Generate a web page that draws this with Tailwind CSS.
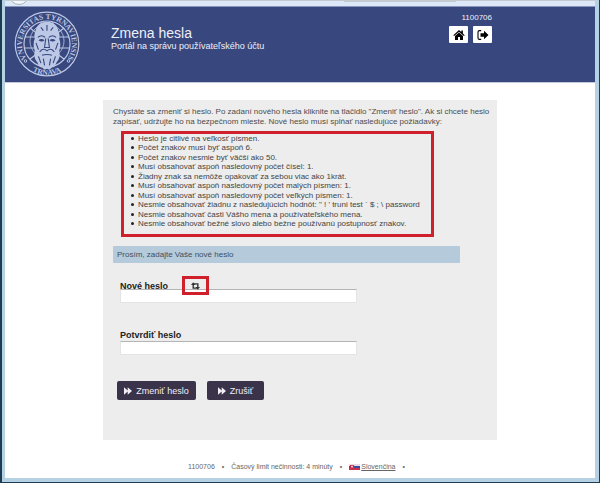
<!DOCTYPE html>
<html lang="sk">
<head>
<meta charset="utf-8">
<title>Zmena hesla</title>
<meta name="viewport" content="width=device-width, initial-scale=1">
<script src="https://cdn.jsdelivr.net/npm/@tailwindcss/browser@4"></script>
</head>
<body class="min-h-screen flex flex-col bg-white border-l-2 border-r border-b border-[#1d3c52] font-['Liberation_Sans',Arial,sans-serif] text-[#4c4c4c]">
<div class="flex-1 flex flex-col border-l-3 border-r-4 border-b-4 border-[#b5d1e4]">
  <div class="relative h-[7px] shrink-0 overflow-hidden border-t border-b border-t-[#c3cbd0] border-b-[#8795bd] bg-[#dce8f7]">
    <div class="absolute -top-4 left-1 size-5 rounded-full border border-[#a9b2ba] bg-[#f3f7fb]"></div>
    <div class="absolute top-0 left-[339px] h-px w-28 bg-[#c3cbd0]"></div>
  </div>
  <header class="flex h-[76px] shrink-0 border-b border-[#c3c9dd] bg-[#38477d] pl-2 text-[#eef0f8]">
    <svg class="mt-[3px] size-[68px] shrink-0" viewBox="0 0 68 68" role="img" aria-label="Universitas Tyrnaviensis Trnava" fill="none" stroke="#bcc8e6">
      <defs>
        <path id="ringTop" d="M16.300 51.700A25 25 0 1 1 51.700 51.700"/>
        <path id="ringBottom" d="M14 57.500A30.500 30.500 0 0 0 54 57.500"/>
      </defs>
      <circle cx="34" cy="34" r="31.800" stroke-width="1.200"/>
      <circle cx="34" cy="34" r="23" stroke-width="1.200"/>
      <g stroke-width="1.200">
        <path d="M12 27h11M45 27h11M11 38h12M45 38h12M17 18l9 7M51 18l-9 7M17 49l8-6M51 49l-8-6M28 12l1 5M40 12l-1 5"/>
        <circle cx="34" cy="31" r="17" stroke-width=".8"/>
      </g>
      <g transform="translate(-7.500 -4) scale(1.220 1.120)">
        <path fill="#bcc8e6" stroke="none" d="M34 14c-6 0-9 4-9.500 9-1 2-1 4-.5 6-1.500 4-1 8 0 11-1 4 0 8 2 10 1 3 2 5 4 5l2 2 2-1 2 1 2-2c2 0 3-2 4-5 2-2 3-6 2-10 1-3 1.500-7 0-11 .5-2 .5-4-.5-6-.5-5-3.500-9-9.500-9z"/>
        <path stroke="#38477d" stroke-width=".9" d="M26.500 28c2-2 4-2 6 0M35.500 28c2-2 4-2 6 0M33 29l-1 8h4l-1-8M28 41c2-3 4-3 6-1 2-2 4-2 6 1M30 44c2-1 6-1 8 0M27 45l2 6M31 47l1 6M37 47l-1 6M41 45l-2 6M29 19l2 3M34 17v5M39 19l-2 3M25 33l2 6M43 33l-2 6"/>
        <path fill="#38477d" stroke="none" d="M27 30.500q2.500-2 5 0-2 2.500-5 0zM36 30.500q2.500-2 5 0-2 2.500-5 0z"/>
      </g>
      <circle cx="12.500" cy="51" r="1.300"/><circle cx="55.500" cy="51" r="1.300"/>
      <g class="font-['Liberation_Serif',serif] font-bold" fill="#bcc8e6" stroke="none" font-size="7.500">
        <text text-anchor="middle"><textPath href="#ringTop" startOffset="50%">VNIVERSITAS TYRNAVIENSIS</textPath></text>
        <text text-anchor="middle"><textPath href="#ringBottom" startOffset="50%">TRNAVA</textPath></text>
      </g>
    </svg>
    <div class="ml-[30px] mt-[18px]">
      <h1 class="text-[14px] leading-4">Zmena hesla</h1>
      <p class="text-[9px] leading-[10px]">Portál na správu používateľského účtu</p>
    </div>
    <div class="ml-auto mr-[103px] mt-[6px] flex flex-col items-end gap-[3px]">
      <span class="text-[8px] leading-[10px]">1100706</span>
      <div class="flex gap-[5px]">
        <button type="button" aria-label="Domov" class="flex h-[17px] w-[19px] items-center justify-center rounded-[1px] bg-white text-black">
          <svg class="size-3" viewBox="0 0 12 12" fill="currentColor"><path d="M6 1L.3 6.200l.8.900L6 2.700l4.900 4.400.8-.9L9.900 4.500V1.500H8.300v1.600zM6 3.500L2 7.100v3.900h3V7.900h2v3.100h3V7.100z"/></svg>
        </button>
        <button type="button" aria-label="Odhlásiť" class="flex h-[17px] w-[19px] items-center justify-center rounded-[1px] bg-white text-black">
          <svg class="size-3" viewBox="0 0 12 12" fill="currentColor"><path fill="none" stroke="currentColor" stroke-width="1.100" d="M4.200 1.600H2.400Q1 1.600 1 3v6q0 1.400 1.400 1.400h1.800"/><path d="M3.500 4.200h3.500V1.700L11.500 6 7 10.300V7.800H3.500z"/></svg>
        </button>
      </div>
    </div>
  </header>

  <main class="mx-auto mt-[17px] w-full max-w-[394px] bg-[#ededed] pb-10 pl-[10px] pr-1 pt-[7px]">
    <p class="text-[8px] leading-[10px]">Chystáte sa zmeniť si heslo. Po zadaní nového hesla kliknite na tlačidlo "Zmeniť heslo". Ak si chcete heslo zapísať, udržujte ho na bezpečnom mieste. Nové heslo musí spĺňať nasledujúce požiadavky:</p>
    <div class="ml-2 mt-1 max-w-[313px] border-3 border-[#cf202b] pb-[6px] pl-[7px]">
      <ul class="flex h-[94px] flex-col justify-between text-[8px] leading-[9px] text-[#444] [&>li]:flex [&>li]:items-center [&>li]:gap-1 [&>li]:before:size-[3px] [&>li]:before:rounded-full [&>li]:before:bg-[#222] [&>li]:before:content-['']">
        <li>Heslo je citlivé na veľkosť písmen.</li>
        <li>Počet znakov musí byť aspoň 6.</li>
        <li>Počet znakov nesmie byť väčší ako 50.</li>
        <li>Musí obsahovať aspoň nasledovný počet čísel: 1.</li>
        <li>Žiadny znak sa nemôže opakovať za sebou viac ako 1krát.</li>
        <li>Musí obsahovať aspoň nasledovný počet malých písmen: 1.</li>
        <li>Musí obsahovať aspoň nasledovný počet veľkých písmen: 1.</li>
        <li>Nesmie obsahovať žiadnu z nasledujúcich hodnôt: " ! ' truni test ` $ ; \ password</li>
        <li>Nesmie obsahovať časti Vášho mena a používateľského mena.</li>
        <li>Nesmie obsahovať bežné slovo alebo bežne používanú postupnosť znakov.</li>
      </ul>
    </div>
    <h2 class="mt-[9px] max-w-[347px] rounded-[1px] bg-[#b5cadb] px-1 text-[8px] leading-[17px] text-[#3f4f60]">Prosím, zadajte Vaše nové heslo</h2>
    <form>
      <div class="ml-[7px] mt-[13px]">
        <div class="flex items-center gap-[14px]">
          <label for="new-password" class="text-[9px] font-bold leading-[10px] text-[#222]">Nové heslo</label>
          <button type="button" aria-label="Vygenerovať heslo" class="relative flex h-[19px] w-[27px] items-center justify-center border-3 border-[#cf202b] text-[#333]">
            <svg class="h-2 w-[9px]" viewBox="0 0 9 8" fill="currentColor"><path d="M2.200.3L0 3h1.500v3.700h4.600L5 5.500H2.900V3h1.500zM6.800 7.700L9 5H7.500V1.300H2.900L4 2.500h2.100V5H4.600z"/></svg>
          </button>
        </div>
        <input id="new-password" type="password" class="-mt-[6px] block h-[14px] w-full max-w-[237px] border border-[#e4e4e4] border-t-[#b4b4b4] bg-white px-1 text-[9px]">
      </div>
      <div class="ml-[7px] mt-[27px]">
        <label for="confirm-password" class="block text-[9px] font-bold leading-[11px] text-[#222]">Potvrdiť heslo</label>
        <input id="confirm-password" type="password" class="block h-[14px] w-full max-w-[237px] border border-[#e4e4e4] border-t-[#b4b4b4] bg-white px-1 text-[9px]">
      </div>
      <div class="ml-1 mt-[26px] flex gap-[11px] text-[9px] leading-[10px] text-[#f1eef5]">
        <button type="submit" class="flex h-[19px] w-[79px] items-center justify-center gap-1 rounded-[2px] bg-[#3a334a]">
          <svg class="h-2 w-2" viewBox="0 0 8 8" fill="currentColor"><path d="M0 .3L3.700 3.600V.3L8 4 3.700 7.700V4.400L0 7.700z"/></svg>Zmeniť heslo
        </button>
        <button type="button" class="flex h-[19px] w-[57px] items-center justify-center gap-1 rounded-[2px] bg-[#3a334a]">
          <svg class="h-2 w-2" viewBox="0 0 8 8" fill="currentColor"><path d="M0 .3L3.700 3.600V.3L8 4 3.700 7.700V4.400L0 7.700z"/></svg>Zrušiť
        </button>
      </div>
    </form>
  </main>

  <footer class="mt-[22px] flex items-center justify-center text-[7px] leading-[9px] text-[#666]">
    <span>1100706</span>
    <span class="mx-[7px]">•</span>
    <span>Časový limit nečinnosti: 4 minúty</span>
    <span class="mx-[7px]">•</span>
    <a href="#" class="flex items-center gap-px">
      <svg class="h-[6px] w-[11px]" viewBox="0 0 11 6"><path fill="#e9dce6" d="M0 0h11v2H0z"/><path fill="#3f4c9c" d="M0 2h11v2H0z"/><path fill="#c8304c" d="M0 4h11v2H0zM1 1h4v2.500L3 5 1 3.500z"/><path stroke="#fff" stroke-width=".6" d="M3 1.500v2.500M2 2.500h2"/></svg>
      <span class="underline">Slovenčina</span>
    </a>
    <span class="mx-[7px]">•</span>
  </footer>
</div>
</body>
</html>
